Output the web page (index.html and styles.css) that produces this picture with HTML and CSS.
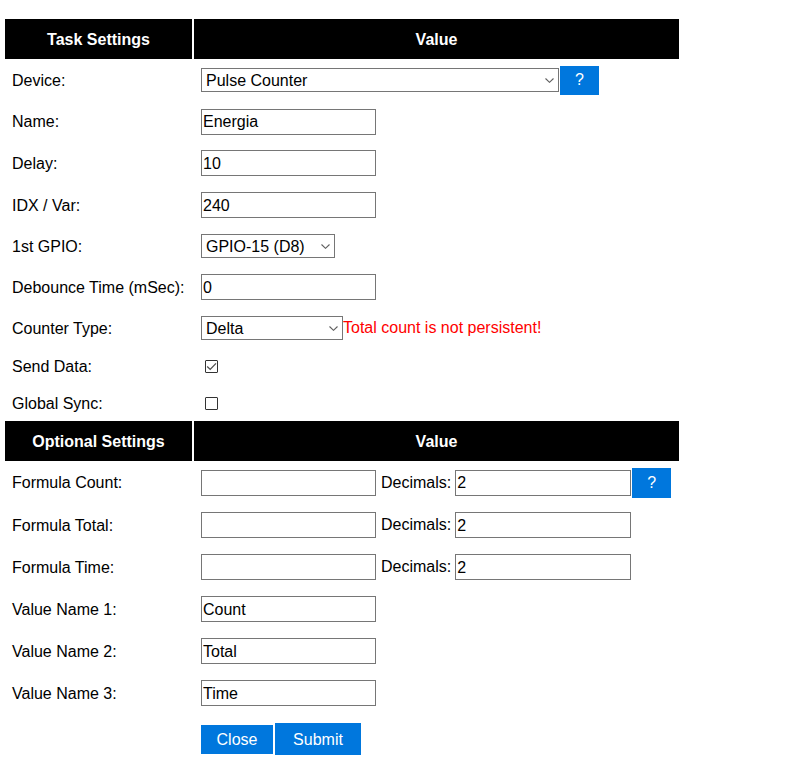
FILE: index.html
```html
<!DOCTYPE html>
<html lang="en">
<head>
<meta charset="utf-8">
<title>Task Settings</title>
<link rel="stylesheet" href="styles.css">
</head>
<body>
<div class="page">
  <form class="form">
    <div class="row head">
      <div class="th">Task Settings</div>
      <div class="th">Value</div>
    </div>
    <div class="row h42">
      <div class="label">Device:</div>
      <div class="value">
        <span class="sel-wrap w-device"><select class="select"><option>Pulse Counter</option></select><svg class="chev" width="9" height="5" viewBox="0 0 9 5"><path d="M0.5 0.5 L4.5 4.3 L8.5 0.5" fill="none" stroke="#5f5f5f" stroke-width="1.1"/></svg></span><button type="button" class="btn help">?</button>
      </div>
    </div>
    <div class="row h41">
      <div class="label">Name:</div>
      <div class="value"><input class="text w175" type="text" value="Energia"></div>
    </div>
    <div class="row h42">
      <div class="label">Delay:</div>
      <div class="value"><input class="text w175" type="text" value="10"></div>
    </div>
    <div class="row h42">
      <div class="label">IDX / Var:</div>
      <div class="value"><input class="text w175" type="text" value="240"></div>
    </div>
    <div class="row h40">
      <div class="label">1st GPIO:</div>
      <div class="value"><span class="sel-wrap w-gpio"><select class="select"><option>GPIO-15 (D8)</option></select><svg class="chev" width="9" height="5" viewBox="0 0 9 5"><path d="M0.5 0.5 L4.5 4.3 L8.5 0.5" fill="none" stroke="#5f5f5f" stroke-width="1.1"/></svg></span></div>
    </div>
    <div class="row h42">
      <div class="label">Debounce Time (mSec):</div>
      <div class="value"><input class="text w175" type="text" value="0"></div>
    </div>
    <div class="row h40">
      <div class="label">Counter Type:</div>
      <div class="value"><span class="sel-wrap w-counter"><select class="select"><option>Delta</option></select><svg class="chev" width="9" height="5" viewBox="0 0 9 5"><path d="M0.5 0.5 L4.5 4.3 L8.5 0.5" fill="none" stroke="#5f5f5f" stroke-width="1.1"/></svg></span><span class="warn">Total count is not persistent!</span></div>
    </div>
    <div class="row h37">
      <div class="label">Send Data:</div>
      <div class="value"><span class="check"><svg class="tick" width="11" height="11" viewBox="0 0 11 11"><path d="M1.2 5.6 L4.2 8.4 L10 2.4" fill="none" stroke="#4d4d4d" stroke-width="1.3"/></svg></span></div>
    </div>
    <div class="row h36">
      <div class="label">Global Sync:</div>
      <div class="value"><span class="check"></span></div>
    </div>
    <div class="row head">
      <div class="th">Optional Settings</div>
      <div class="th">Value</div>
    </div>
    <div class="row h43">
      <div class="label">Formula Count:</div>
      <div class="value"><input class="text w175" type="text" value=""><span class="dec">Decimals:</span><input class="text w176" type="text" value="2"><button type="button" class="btn help help-f">?</button></div>
    </div>
    <div class="row h42">
      <div class="label">Formula Total:</div>
      <div class="value"><input class="text w175" type="text" value=""><span class="dec">Decimals:</span><input class="text w176" type="text" value="2"></div>
    </div>
    <div class="row h42">
      <div class="label">Formula Time:</div>
      <div class="value"><input class="text w175" type="text" value=""><span class="dec">Decimals:</span><input class="text w176" type="text" value="2"></div>
    </div>
    <div class="row h42">
      <div class="label">Value Name 1:</div>
      <div class="value"><input class="text w175" type="text" value="Count"></div>
    </div>
    <div class="row h42">
      <div class="label">Value Name 2:</div>
      <div class="value"><input class="text w175" type="text" value="Total"></div>
    </div>
    <div class="row h42">
      <div class="label">Value Name 3:</div>
      <div class="value"><input class="text w175" type="text" value="Time"></div>
    </div>
    <div class="row h50">
      <div class="label"></div>
      <div class="value actions"><button type="button" class="btn close">Close</button><button type="submit" class="btn submit">Submit</button></div>
    </div>
  </form>
</div>
</body>
</html>
```
FILE: styles.css
```css
html, body {
  margin: 0;
  padding: 0;
  background: #fff;
}

body {
  font-family: "Liberation Sans", Arial, sans-serif;
  font-size: 16px;
  color: #000;
}

.page {
  padding: 19px 0 0 5px;
}

.form {
  margin: 0;
  width: 674px;
}

.row {
  display: grid;
  grid-template-columns: 187px 485px;
  column-gap: 2px;
  align-items: center;
}

.head {
  height: 40px;
  align-items: stretch;
}

.th {
  background: #000;
  color: #fff;
  font-weight: bold;
  display: flex;
  align-items: center;
  justify-content: center;
  padding-top: 2px;
}

.h36 { height: 36px; }
.h37 { height: 37px; }
.h40 { height: 40px; }
.h41 { height: 41px; }
.h42 { height: 42px; }
.h43 { height: 43px; }
.h50 { height: 50px; }

.label {
  padding-left: 7px;
  padding-top: 1px;
  white-space: nowrap;
}

.value {
  padding-left: 7px;
  display: flex;
  align-items: center;
  white-space: nowrap;
}

.text {
  box-sizing: border-box;
  height: 26px;
  margin: 0;
  padding: 1px 0 0 1px;
  border: 1px solid #767676;
  border-radius: 0;
  background: #fff;
  font-family: "Liberation Sans", Arial, sans-serif;
  font-size: 16px;
  color: #000;
  outline: none;
}

.w175 { width: 175px; }
.w176 { width: 176px; }

.sel-wrap {
  position: relative;
  display: block;
  height: 24px;
}

.select {
  box-sizing: border-box;
  width: 100%;
  height: 24px;
  margin: 0;
  padding: 0 16px 0 4px;
  border: 1px solid #767676;
  border-radius: 0;
  background-color: #fff;
  font-family: "Liberation Sans", Arial, sans-serif;
  font-size: 16px;
  color: #000;
  -webkit-appearance: none;
  appearance: none;
  outline: none;
}

.chev {
  position: absolute;
  right: 5px;
  top: 10px;
  pointer-events: none;
}

.w-device { width: 358px; }
.w-gpio { width: 134px; }
.w-counter { width: 142px; }

.warn {
  color: #ff0000;
}

.dec {
  margin-left: 5px;
  margin-right: 4px;
}

.check {
  box-sizing: border-box;
  display: block;
  width: 13px;
  height: 13px;
  margin-left: 4px;
  border: 1px solid #333;
  border-radius: 1px;
  background: #fff;
}

.tick {
  display: block;
}

.btn {
  box-sizing: border-box;
  margin: 0;
  padding: 0;
  border: none;
  border-radius: 0;
  background: #0077dd;
  color: #fff;
  font-family: "Liberation Sans", Arial, sans-serif;
  font-size: 16px;
  display: flex;
  align-items: center;
  justify-content: center;
}

.help {
  width: 39px;
  height: 29px;
  margin-left: 1px;
}

.help-f {
  height: 30px;
}

.actions {
  align-items: flex-end;
}

.close {
  width: 72px;
  height: 29px;
  margin-bottom: 1px;
}

.submit {
  width: 86px;
  height: 32px;
  margin-left: 2px;
  padding-top: 1px;
}
```
